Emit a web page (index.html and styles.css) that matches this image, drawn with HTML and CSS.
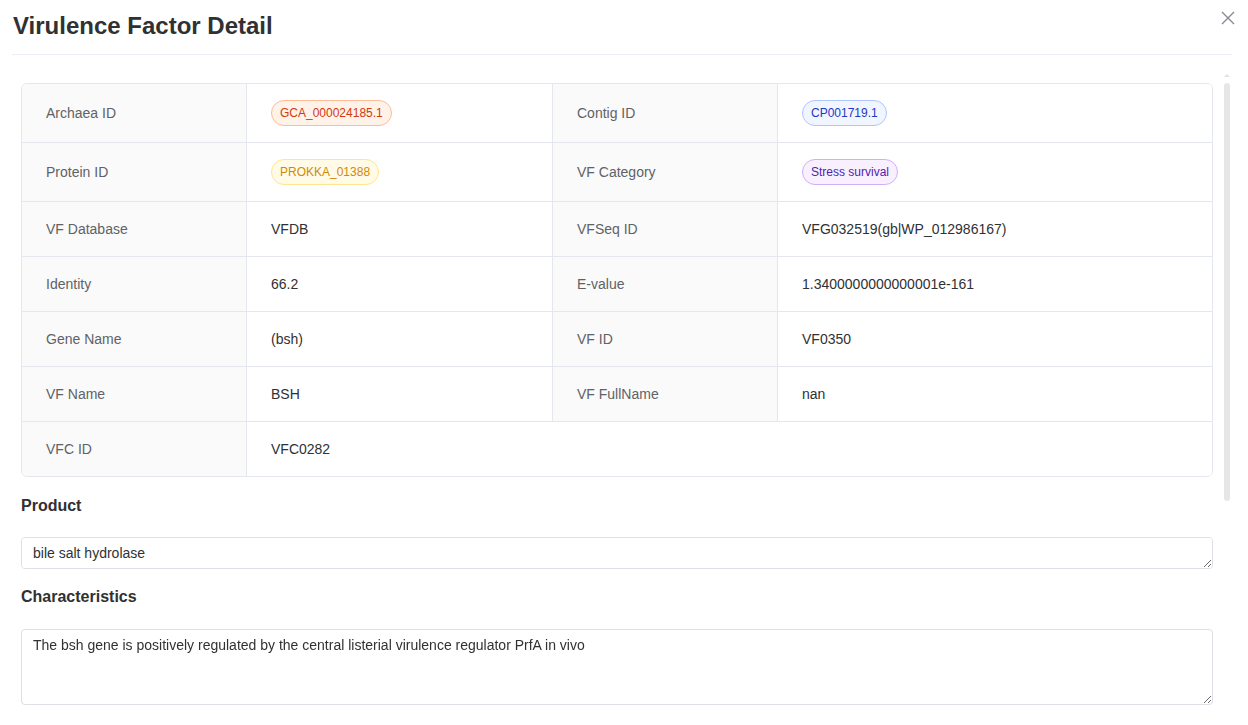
FILE: index.html
```html
<!DOCTYPE html>
<html lang="en">
<head>
<meta charset="utf-8">
<title>Virulence Factor Detail</title>
<link rel="stylesheet" href="styles.css">
</head>
<body>
<div class="dialog">
  <header class="dialog-header">
    <h1 class="dialog-title">Virulence Factor Detail</h1>
    <button class="close-btn" aria-label="Close">
      <svg width="14" height="14" viewBox="0 0 14 14"><path d="M1 1 L13 13 M13 1 L1 13" stroke="#86898f" stroke-width="1.4" fill="none"/></svg>
    </button>
  </header>
  <div class="dialog-body">
    <div class="content">
      <div class="desc">
        <div class="cell label">Archaea ID</div>
        <div class="cell value tag-cell"><span class="tag tag-volcano">GCA_000024185.1</span></div>
        <div class="cell label">Contig ID</div>
        <div class="cell value tag-cell last"><span class="tag tag-blue">CP001719.1</span></div>

        <div class="cell label">Protein ID</div>
        <div class="cell value tag-cell"><span class="tag tag-gold">PROKKA_01388</span></div>
        <div class="cell label">VF Category</div>
        <div class="cell value tag-cell last"><span class="tag tag-purple">Stress survival</span></div>

        <div class="cell label">VF Database</div>
        <div class="cell value">VFDB</div>
        <div class="cell label">VFSeq ID</div>
        <div class="cell value last">VFG032519(gb|WP_012986167)</div>

        <div class="cell label">Identity</div>
        <div class="cell value">66.2</div>
        <div class="cell label">E-value</div>
        <div class="cell value last">1.3400000000000001e-161</div>

        <div class="cell label">Gene Name</div>
        <div class="cell value">(bsh)</div>
        <div class="cell label">VF ID</div>
        <div class="cell value last">VF0350</div>

        <div class="cell label">VF Name</div>
        <div class="cell value">BSH</div>
        <div class="cell label">VF FullName</div>
        <div class="cell value last">nan</div>

        <div class="cell label bottom">VFC ID</div>
        <div class="cell value span3 last bottom">VFC0282</div>
      </div>

      <h3 class="section-title first">Product</h3>
      <textarea class="field field-short" readonly>bile salt hydrolase</textarea>

      <h3 class="section-title">Characteristics</h3>
      <textarea class="field field-tall" readonly>The bsh gene is positively regulated by the central listerial virulence regulator PrfA in vivo</textarea>
    </div>
    <div class="scrollbar">
      <div class="scroll-arrow"></div>
      <div class="scroll-thumb"></div>
    </div>
  </div>
</div>
</body>
</html>
```

FILE: styles.css
```css
* { box-sizing: border-box; }

html, body {
  margin: 0;
  padding: 0;
  background: #ffffff;
  font-family: "Liberation Sans", Arial, Helvetica, sans-serif;
  color: #303133;
}

body {
  width: 1248px;
  height: 725px;
  overflow: hidden;
}

.dialog {
  width: 1248px;
}

.dialog-header {
  display: flex;
  align-items: flex-start;
  justify-content: space-between;
  margin: 0 16px 0 12px;
  padding: 10px 0 12px 1px;
  border-bottom: 1px solid #ebeef5;
}

.dialog-title {
  margin: 0;
  font-size: 24px;
  line-height: 32px;
  font-weight: 700;
  color: #303133;
}

.close-btn {
  border: 0;
  background: transparent;
  padding: 0;
  margin: 1px -3px 0 0;
  width: 14px;
  height: 14px;
  display: flex;
  cursor: pointer;
}

.dialog-body {
  display: flex;
  align-items: flex-start;
}

.content {
  margin-left: 21px;
  width: 1192px;
  padding-top: 28px;
  display: flex;
  flex-direction: column;
}

.desc {
  display: grid;
  grid-template-columns: 225px 306px 225px 1fr;
  border: 1px solid #e4e7ed;
  border-radius: 6px;
  overflow: hidden;
  font-size: 14px;
}

.cell {
  padding: 16px 24px;
  line-height: 22px;
  border-right: 1px solid #e4e7ed;
  border-bottom: 1px solid #e4e7ed;
  display: flex;
  align-items: center;
}

.cell.last { border-right: 0; }
.cell.bottom { border-bottom: 0; }

.label {
  background: #fafafa;
  color: #606266;
}

.value {
  background: #ffffff;
  color: #303133;
}

.span3 { grid-column: span 3; }

.tag {
  display: inline-flex;
  align-items: center;
  height: 26px;
  padding: 0 8px;
  border: 1px solid;
  border-radius: 13px;
  font-size: 12px;
  line-height: 24px;
  white-space: nowrap;
}

.tag-volcano { background: #fff2e8; border-color: #ffbb96; color: #d4380d; }
.tag-gold    { background: #fffbe6; border-color: #ffe58f; color: #d48806; }
.tag-blue    { background: #f0f5ff; border-color: #adc6ff; color: #1d39c4; }
.tag-purple  { background: #f9f0ff; border-color: #d3adf7; color: #531dab; }

.section-title {
  margin: 16px 0 20px;
  font-size: 16px;
  line-height: 24px;
  font-weight: 700;
  color: #303133;
}

.section-title.first {
  margin: 17px 0 19px;
}

.field {
  display: block;
  width: 100%;
  margin: 0;
  padding: 5px 11px;
  border: 1px solid #dcdfe6;
  border-radius: 4px;
  font-family: "Liberation Sans", Arial, Helvetica, sans-serif;
  font-size: 14px;
  line-height: 21px;
  color: #303133;
  background: #ffffff;
  resize: vertical;
  outline: none;
}

.field-short { height: 32px; }
.field-tall { height: 76px; }

.scrollbar {
  margin-left: 11px;
  margin-top: 19px;
  width: 6px;
  display: flex;
  flex-direction: column;
  align-items: center;
}

.scroll-arrow {
  width: 0;
  height: 0;
  border-left: 3px solid transparent;
  border-right: 3px solid transparent;
  border-bottom: 3px solid #e3e3e3;
}

.scroll-thumb {
  margin-top: 6px;
  width: 6px;
  height: 418px;
  border-radius: 3px;
  background: #e6e6e6;
}
```
